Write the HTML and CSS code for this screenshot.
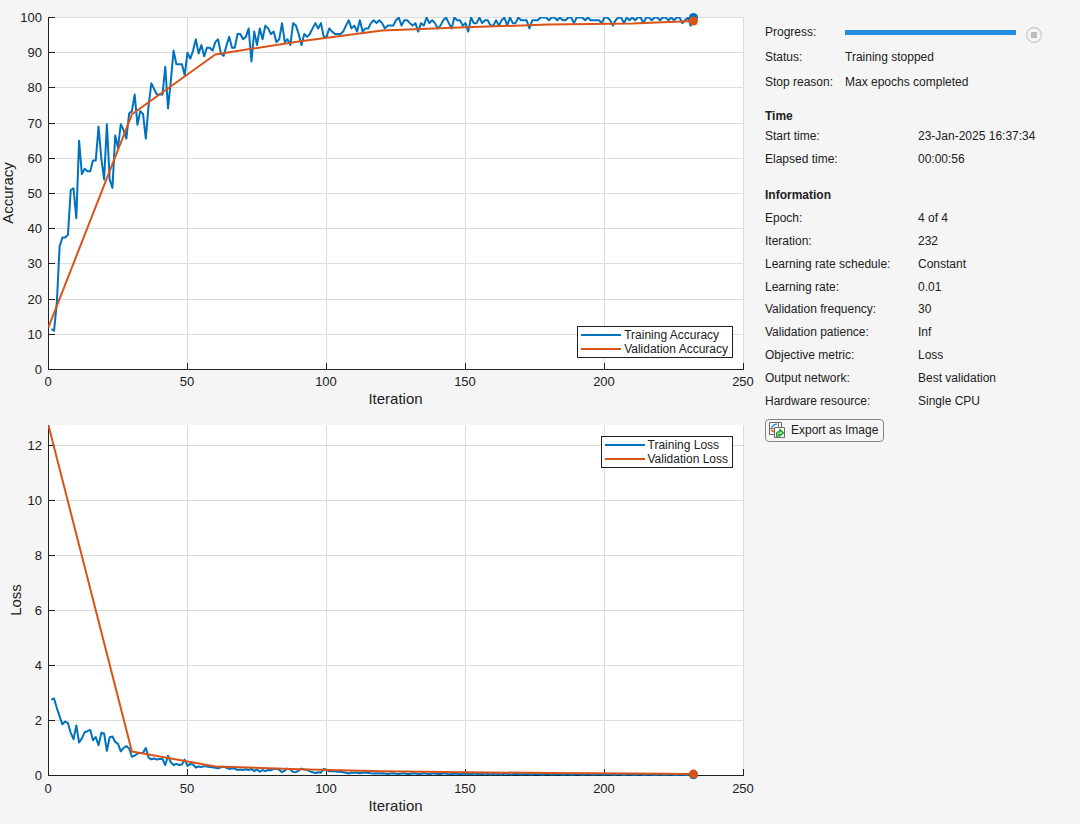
FILE: index.html
```html
<!DOCTYPE html>
<html lang="en">
<head>
<meta charset="utf-8">
<meta name="viewport" content="width=device-width, initial-scale=1">
<title>Training Progress</title>
<link rel="stylesheet" href="styles.css">
</head>
<body>
<main class="page">
  <section class="charts">
    <figure class="chart" id="accuracy">
      <svg class="plot" role="img" aria-label="Accuracy by iteration"></svg>
      <ul class="legend legend-bottom">
        <li class="key training">Training Accuracy</li>
        <li class="key validation">Validation Accuracy</li>
      </ul>
    </figure>
    <figure class="chart" id="loss">
      <svg class="plot" role="img" aria-label="Loss by iteration"></svg>
      <ul class="legend legend-top">
        <li class="key training">Training Loss</li>
        <li class="key validation">Validation Loss</li>
      </ul>
    </figure>
  </section>

  <aside class="side">
    <div class="status">
      <label for="progress">Progress:</label>
      <div class="progress-row">
        <progress id="progress" class="bar" value="100" max="100"></progress>
        <button class="stop" type="button" aria-label="Stop training" disabled>
          <svg viewBox="0 0 16 16" width="16" height="16"><circle cx="8" cy="8" r="7.4" fill="none" stroke="#c4c4c4" stroke-width="1.1"/><rect x="5" y="5" width="6" height="6" rx=".5" fill="#bdbdbd"/></svg>
        </button>
      </div>
      <span>Status:</span><span>Training stopped</span>
      <span>Stop reason:</span><span>Max epochs completed</span>
    </div>

    <h2 class="heading">Time</h2>
    <dl class="facts time">
      <dt>Start time:</dt><dd>23-Jan-2025 16:37:34</dd>
      <dt>Elapsed time:</dt><dd>00:00:56</dd>
    </dl>

    <h2 class="heading">Information</h2>
    <dl class="facts info">
      <dt>Epoch:</dt><dd>4 of 4</dd>
      <dt>Iteration:</dt><dd>232</dd>
      <dt>Learning rate schedule:</dt><dd>Constant</dd>
      <dt>Learning rate:</dt><dd>0.01</dd>
      <dt>Validation frequency:</dt><dd>30</dd>
      <dt>Validation patience:</dt><dd>Inf</dd>
      <dt>Objective metric:</dt><dd>Loss</dd>
      <dt>Output network:</dt><dd>Best validation</dd>
      <dt>Hardware resource:</dt><dd>Single CPU</dd>
    </dl>

    <button class="export" type="button">
      <svg viewBox="0 0 16 16" width="16" height="16" fill="none">
        <path d="M.5.5h12v12H.5z" fill="#fff" stroke="#6b6b6b"/>
        <path d="M.5 6.500h5M9.500.5v5" stroke="#6b6b6b"/>
        <path d="M2 4.800 3.800 4.300 5 2.900 7.800 2" stroke="#1c8be0" stroke-width="1.400"/>
        <path d="M2 8 3.500 9 5 9.800" stroke="#e0622c" stroke-width="1.600"/>
        <path d="M5.500 5.500h10v10h-10z" fill="#fff" stroke="#6b6b6b"/>
        <path d="M7.400 14.300V12.300Q7.400 9.700 10 9.700h.9V7.500l3.700 3.300-3.700 3.200V12.200H10q-.8 0-.8 2.100z" fill="#a6e3a3" stroke="#0c9420" stroke-width="1.100"/>
      </svg>
      <span>Export as Image</span>
    </button>
  </aside>
</main>
<script src="charts.js"></script>
</body>
</html>
```

FILE: styles.css
```css
* { box-sizing: border-box; }

body {
  margin: 0;
  background: #f5f5f5;
  color: #212121;
  font: 12px/14px "Liberation Sans", Arial, sans-serif;
}

.page { display: flex; min-height: 100vh; }

.charts {
  flex: 1;
  min-width: 0;
  display: grid;
  grid-template-rows: 1fr 1fr;
  padding-top: 8px;
}

.chart { position: relative; margin: 0; min-height: 260px; }

.plot { position: absolute; inset: 0; width: 100%; height: 100%; }

.area { fill: #fff; }
.grid { stroke: #dcdcdc; fill: none; shape-rendering: crispEdges; }
.axis { stroke: #212121; fill: none; shape-rendering: crispEdges; }
.line { fill: none; stroke-width: 2; stroke-linejoin: round; }
.line.training { stroke: #0072bd; }
.line.validation { stroke: #d95319; }
.dot.training { fill: #0072bd; }
.dot.validation { fill: #d95319; }
.tick { font-size: 13px; fill: #212121; }
.title { font-size: 15px; fill: #212121; text-anchor: middle; }
.middle { text-anchor: middle; }
.end { text-anchor: end; }

.legend {
  position: absolute;
  right: 32px;
  margin: 0;
  padding: 1px 4px 1px 3px;
  list-style: none;
  background: #fff;
  border: 1px solid #212121;
}
.legend-bottom { bottom: 58px; }
.legend-top { top: 20px; }

.key { display: flex; align-items: center; gap: 3px; height: 14px; }
.key::before { content: ""; width: 40px; height: 2px; background: #0072bd; }
.key.validation::before { background: #d95319; }

.side { width: 315px; padding: 19px 38px 20px 0; }

.status {
  display: grid;
  grid-template-columns: 80px 1fr;
  grid-auto-rows: 25px;
  align-items: center;
  margin-bottom: 15px;
}

.progress-row { display: flex; align-items: center; gap: 10px; padding-top: 2px; }

.bar {
  flex: 1;
  min-width: 0;
  height: 5px;
  border: 0;
  appearance: none;
  background: #ddd;
}
.bar::-webkit-progress-bar { background: #ddd; }
.bar::-webkit-progress-value { background: #268cdd; }
.bar::-moz-progress-bar { background: #268cdd; }

.stop { width: 16px; height: 16px; margin-top: 4px; padding: 0; border: 0; background: none; }
.stop svg, .export svg { display: block; }

.heading { margin: 0; font-size: 12px; line-height: 14px; }

.facts {
  display: grid;
  grid-template-columns: 153px 1fr;
  grid-auto-rows: 1fr;
  align-items: center;
  margin: 0;
}
.facts dd { margin: 0; white-space: nowrap; }
.time { height: 46px; margin: 1px 0 18px; }
.info { height: 205px; margin: 5px 0 7px; }

.export {
  display: flex;
  align-items: center;
  gap: 6px;
  height: 23px;
  padding: 0 5px 1px 3px;
  border: 1px solid #858585;
  border-radius: 4px;
  background: #f5f5f5;
  color: inherit;
  font: inherit;
}
```

FILE: charts.js
```js
const iterations = 232;

const accuracy = [
  11.5,11,19,35,37.5,37.5,38.3,51,51.5,43,65,55.5,57,56.3,56.3,59.4,59.4,69,60,54,
  69.7,54,51.6,66.5,63,69.7,68,65.6,72.7,73.4,78.1,69.5,73.4,72.6,65.6,75,81.3,79.7,78.1,78.1,
  78.1,86,74.2,82,90.6,86.7,86.7,86.7,83.6,90,88.3,90.6,93.8,89.8,92.2,89,91.4,91.4,90.6,93,
  93.8,89.8,89.1,92,94.5,91.4,91.4,95.3,95.3,93.8,94.5,96.9,87.5,96,92.2,96.9,93.8,97.7,96.9,95.3,
  96,93,93.8,98.4,93,93.8,92.2,98.4,97.7,95.3,92.2,95.3,94.5,95.3,96.9,98.4,96.9,98.4,94.5,94.5,
  96.9,96,95.3,95.3,95.3,96,97.7,99.2,96.9,97.7,96,99.2,96,96.9,96.9,98.4,99.2,98.4,99.2,98.4,
  96.9,97.7,97.7,97.7,99.2,100,97.7,99.2,99.2,98.4,97.7,98.4,96,98.4,97.7,100,98.4,99.2,98.4,96.9,
  97.7,99.2,100,98.4,96.9,100,99.2,99.2,97.7,98.4,96,100,98.4,98.4,100,98.4,99.2,99.2,97.7,97.7,
  99.2,97.7,99.2,100,97.7,100,98.4,98.4,100,99.2,99.2,99.2,96.9,99.2,99.2,99.2,100,100,100,99.2,
  100,100,99.2,100,99.2,99.2,100,100,98.4,100,100,100,99.2,100,99.2,99.2,99.2,99.2,98.4,100,
  100,99.2,97.7,99.2,100,100,98.4,100,99.2,100,99.2,100,100,98.4,100,100,99.2,100,100,99.2,
  100,100,99.2,100,99.2,100,100,98.4,99.2,100,97.7,100
];

const loss = [
  2.76,2.8,2.45,2.15,1.86,1.96,1.9,1.55,1.32,1.82,1.2,1.35,1.57,1.61,1.66,1.28,1.4,1.1,1.55,1.53,
  0.9,1.39,1.42,1.22,1.15,0.88,1,1.07,0.98,0.68,0.72,0.8,0.82,0.83,1,0.65,0.59,0.62,0.58,0.6,
  0.6,0.38,0.72,0.48,0.38,0.42,0.38,0.4,0.58,0.35,0.42,0.4,0.29,0.33,0.31,0.34,0.33,0.31,0.3,0.28,
  0.26,0.3,0.32,0.28,0.24,0.26,0.25,0.2,0.22,0.2,0.23,0.2,0.24,0.16,0.22,0.14,0.2,0.16,0.2,0.19,
  0.24,0.24,0.21,0.12,0.18,0.25,0.22,0.13,0.12,0.18,0.25,0.22,0.21,0.15,0.12,0.09,0.12,0.1,0.24,0.21,
  0.15,0.16,0.15,0.14,0.14,0.12,0.1,0.07,0.11,0.1,0.11,0.08,0.11,0.1,0.1,0.08,0.07,0.08,0.07,0.08
];
while (loss.length < iterations) {
  const i = loss.length;
  loss.push(0.07 - (i - 120) * 0.0004 + 0.015 * Math.sin(i * 1.7));
}

const points = values => values.map((v, i) => [i + 1, v]);

const charts = [
  {
    id: "accuracy", label: "Accuracy", labelX: 13, top: 9, bottom: 47, textDrop: 17,
    max: 100, step: 10,
    training: points(accuracy),
    validation: [[0,12],[30,72.5],[60,89.5],[90,93.2],[120,96.3],[150,97.2],[180,98],[210,98.3],[232,99]]
  },
  {
    id: "loss", label: "Loss", labelX: 21, top: 9, bottom: 49, textDrop: 18,
    max: 12.72, step: 2,
    training: points(loss),
    validation: [[0,12.72],[30,0.87],[60,0.33],[90,0.23],[120,0.15],[150,0.12],[180,0.09],[210,0.07],[232,0.05]]
  }
];

function draw(chart) {
  const svg = document.querySelector("#" + chart.id + " .plot");
  const { width, height } = svg.getBoundingClientRect();
  const left = 48, right = width - 22;
  const top = chart.top, bottom = height - chart.bottom;
  const x = v => left + (right - left) * v / 250;
  const y = v => bottom - (bottom - top) * v / chart.max;
  const snap = v => Math.round(v) + 0.5;

  let grid = "", axis = "", text = "";
  for (let v = 0; v <= 250; v += 50) {
    const px = snap(x(v));
    grid += `M${px} ${top}V${bottom}`;
    axis += `M${px} ${bottom}v-6`;
    text += `<text class="tick middle" x="${Math.round(x(v))}" y="${bottom + chart.textDrop}">${v}</text>`;
  }
  for (let v = 0; v <= chart.max; v += chart.step) {
    const py = snap(y(v));
    grid += `M${left} ${py}H${right + 1}`;
    axis += `M${left} ${py}h7`;
    text += `<text class="tick end" x="42" y="${Math.round(y(v)) + 5}">${v}</text>`;
  }
  axis += `M${left + 0.5} ${top}V${bottom + 0.5}H${right + 1}`;

  const line = name =>
    `<polyline class="line ${name}" points="${chart[name].map(([a, b]) => (x(a) + 0.5).toFixed(2) + "," + (y(b) + 0.5).toFixed(2)).join(" ")}"/>`;
  const dot = name => {
    const [a, b] = chart[name].at(-1);
    return `<circle class="dot ${name}" cx="${x(a) + 0.5}" cy="${y(b) + 0.5}" r="4.5"/>`;
  };
  const mid = (top + bottom) / 2;

  svg.innerHTML =
    `<rect class="area" x="${left}" y="${top}" width="${right - left}" height="${bottom - top}"/>` +
    `<path class="grid" d="${grid}"/><path class="axis" d="${axis}"/>` +
    `<clipPath id="${chart.id}-clip"><rect x="${left}" y="${top}" width="${right - left}" height="${bottom - top + 1}"/></clipPath>` +
    `<g clip-path="url(#${chart.id}-clip)">${line("training")}${line("validation")}</g>` +
    dot("training") + dot("validation") + text +
    `<text class="title" x="${(left + right) / 2}" y="${bottom + chart.textDrop + 18}">Iteration</text>` +
    `<text class="title" transform="translate(${chart.labelX} ${mid}) rotate(-90)">${chart.label}</text>`;
}

const drawAll = () => charts.forEach(draw);
drawAll();
window.addEventListener("resize", drawAll);
```
